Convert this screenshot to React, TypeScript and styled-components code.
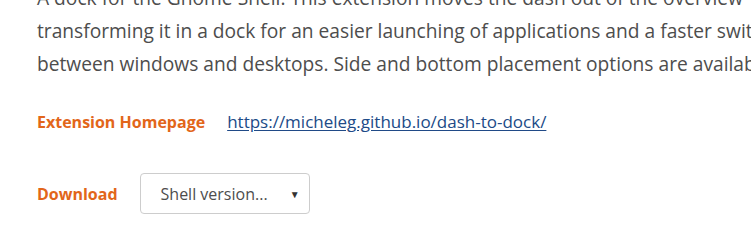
import React from "react";
import styled, { createGlobalStyle } from "styled-components";

const Global = createGlobalStyle`
  html, body { margin: 0; padding: 0; background: #fff; }
  body { font-family: "Open Sans", "Noto Sans", sans-serif; overflow: hidden; }
`;

const Page = styled.div`
  width: 751px;
  height: 228px;
  overflow: hidden;
  padding-left: 37px;
  box-sizing: border-box;
`;

const Description = styled.p`
  margin: -19px 0 0 0;
  font-size: 19.2px;
  line-height: 33px;
  color: #4d4d4d;
  white-space: nowrap;
`;

const InfoRow = styled.div<{ $top: number }>`
  display: flex;
  align-items: center;
  gap: 22px;
  margin-top: ${(p) => p.$top}px;
`;

const Label = styled.span`
  font-size: 16px;
  font-weight: 700;
  color: #e2661a;
`;

const Link = styled.a`
  font-size: 17px;
  color: #204a87;
  text-decoration: underline;
  text-underline-offset: 2px;
`;

const Select = styled.div`
  width: 170px;
  height: 41px;
  box-sizing: border-box;
  border: 1px solid #cdcdcd;
  border-radius: 4px;
  display: flex;
  align-items: center;
  justify-content: space-between;
  padding: 0 9px 0 20px;
  font-size: 16px;
  color: #4d4d4d;
`;

const Arrow = styled.span`
  font-size: 10px;
  color: #333;
`;

export default function App() {
  return (
    <>
      <Global />
      <Page>
        <Description>
          A dock for the Gnome Shell. This extension moves the dash out of the overview
          <br />
          transforming it in a dock for an easier launching of applications and a faster switching
          <br />
          between windows and desktops. Side and bottom placement options are available.
        </Description>
        <InfoRow $top={30}>
          <Label>Extension Homepage</Label>
          <Link href="#">https://micheleg.github.io/dash-to-dock/</Link>
        </InfoRow>
        <InfoRow $top={40}>
          <Label>Download</Label>
          <Select>
            <span>Shell version...</span>
            <Arrow>▼</Arrow>
          </Select>
        </InfoRow>
      </Page>
    </>
  );
}
